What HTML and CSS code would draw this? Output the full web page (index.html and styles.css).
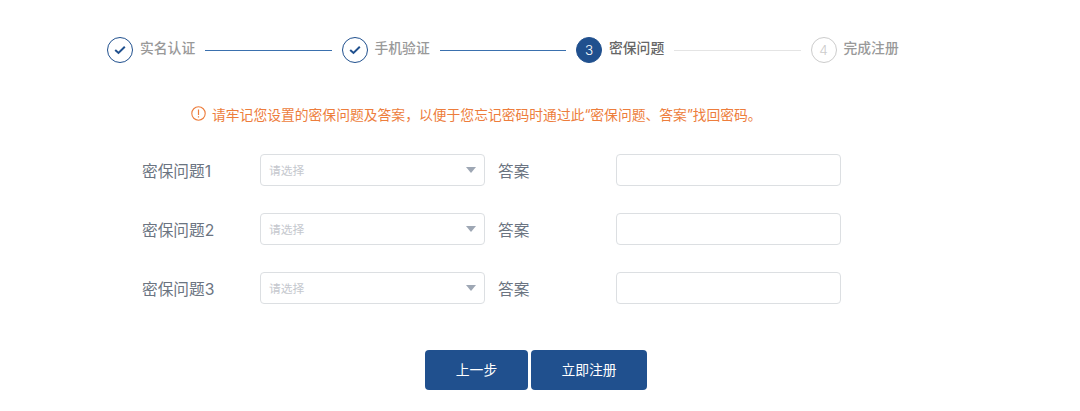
FILE: index.html
```html
<!DOCTYPE html>
<html lang="zh-CN">
<head>
    <meta charset="UTF-8">
    <meta name="viewport" content="width=device-width, initial-scale=1.0">
    <title>密保问题</title>
    <link rel="stylesheet" href="styles.css">
</head>
<body>
    <div class="steps">
        <div class="step finish">
            <span class="step-icon">
                <svg width="12" height="10" viewBox="0 0 12 10"><path d="M1.2 4.9 L4.5 7.9 L10.8 1.8" fill="none" stroke="currentColor" stroke-width="2"/></svg>
            </span>
            <span class="step-title">实名认证</span>
            <span class="step-line"></span>
        </div>
        <div class="step finish">
            <span class="step-icon">
                <svg width="12" height="10" viewBox="0 0 12 10"><path d="M1.2 4.9 L4.5 7.9 L10.8 1.8" fill="none" stroke="currentColor" stroke-width="2"/></svg>
            </span>
            <span class="step-title">手机验证</span>
            <span class="step-line"></span>
        </div>
        <div class="step process">
            <span class="step-icon">3</span>
            <span class="step-title">密保问题</span>
            <span class="step-line"></span>
        </div>
        <div class="step wait">
            <span class="step-icon">4</span>
            <span class="step-title">完成注册</span>
        </div>
    </div>

    <div class="tip">
        <svg class="tip-icon" width="15" height="15" viewBox="0 0 15 15">
            <circle cx="7.5" cy="7.5" r="6.7" fill="none" stroke="currentColor" stroke-width="1.1"/>
            <path d="M7.5 3.4 V8.9 M7.5 10.2 V11.5" stroke="currentColor" stroke-width="1.2"/>
        </svg>
        <p>请牢记您设置的密保问题及答案，以便于您忘记密码时通过此<span class="quote">“</span>密保问题、答案<span class="quote">”</span>找回密码。</p>
    </div>

    <form class="form">
        <div class="form-row">
            <label class="label">密保问题1</label>
            <div class="select"><span>请选择</span><i class="caret"></i></div>
            <label class="label answer">答案</label>
            <input class="input" type="text">
        </div>
        <div class="form-row">
            <label class="label">密保问题2</label>
            <div class="select"><span>请选择</span><i class="caret"></i></div>
            <label class="label answer">答案</label>
            <input class="input" type="text">
        </div>
        <div class="form-row">
            <label class="label">密保问题3</label>
            <div class="select"><span>请选择</span><i class="caret"></i></div>
            <label class="label answer">答案</label>
            <input class="input" type="text">
        </div>
        <div class="actions">
            <button class="btn btn-prev" type="button">上一步</button>
            <button class="btn btn-submit" type="button">立即注册</button>
        </div>
    </form>
</body>
</html>
```
FILE: styles.css
```css
* {
    margin: 0;
    padding: 0;
    box-sizing: border-box;
}

body {
    font-family: Inter, "Noto Sans CJK SC", sans-serif;
    background: #fff;
    padding-top: 37px;
    overflow: hidden;
}

.steps {
    display: flex;
    height: 26px;
    padding-left: 107px;
}

.step {
    display: flex;
    align-items: center;
    width: 234.5px;
    color: #20508e;
}

.step-icon {
    display: flex;
    align-items: center;
    justify-content: center;
    width: 26px;
    height: 26px;
    border: 1px solid #20508e;
    border-radius: 50%;
    font-size: 13.5px;
    font-weight: 300;
}

.step-title {
    margin: 0 10px 4px 7px;
    color: #999;
    font-size: 13.8px;
    font-weight: 500;
    line-height: 22px;
    white-space: nowrap;
}

.step-line {
    flex: 1;
    height: 1px;
    margin-right: 10px;
    background: #3a70ae;
}

.process .step-icon {
    background: #20508e;
    color: #fff;
}

.process .step-title {
    color: #666;
}

.process .step-line {
    background: #e4e4e4;
}

.wait .step-icon {
    border-color: #ccc;
    color: #ccc;
}

.tip {
    display: flex;
    align-items: center;
    height: 22px;
    margin: 40px 0 0 191px;
    color: #ed7d3c;
    font-size: 13.8px;
    white-space: nowrap;
}

.tip-icon {
    margin: 0 6px 1px 0;
}

.quote {
    letter-spacing: -0.3px;
}

.form {
    margin-top: 29px;
    padding-left: 142px;
}

.form-row {
    display: flex;
    height: 32px;
    margin-bottom: 27px;
}

.label {
    width: 118px;
    color: #6b7481;
    font-size: 15.7px;
    line-height: 36px;
}

.answer {
    padding-left: 13px;
    width: 131px;
}

.select,
.input {
    width: 225px;
    height: 32px;
    border: 1px solid #dcdfe2;
    border-radius: 4px;
    background: #fff;
}

.select {
    display: flex;
    align-items: center;
    justify-content: space-between;
    padding: 0 8px;
    color: #c5c8ce;
    font-size: 11.8px;
}

.select span {
    padding-bottom: 2px;
}

.caret {
    border: 5px solid transparent;
    border-top: 6px solid #9ea7b4;
    border-bottom: 0;
}

.input {
    padding: 0 8px;
    outline: none;
}

.actions {
    display: flex;
    gap: 3px;
    margin: 46px 0 0 283px;
}

.btn {
    height: 40px;
    padding-bottom: 2px;
    border: none;
    border-radius: 4px;
    background: #20508e;
    color: #fff;
    font-family: inherit;
    font-size: 13.8px;
    cursor: pointer;
}

.btn-prev {
    width: 103px;
}

.btn-submit {
    width: 116px;
}
```
